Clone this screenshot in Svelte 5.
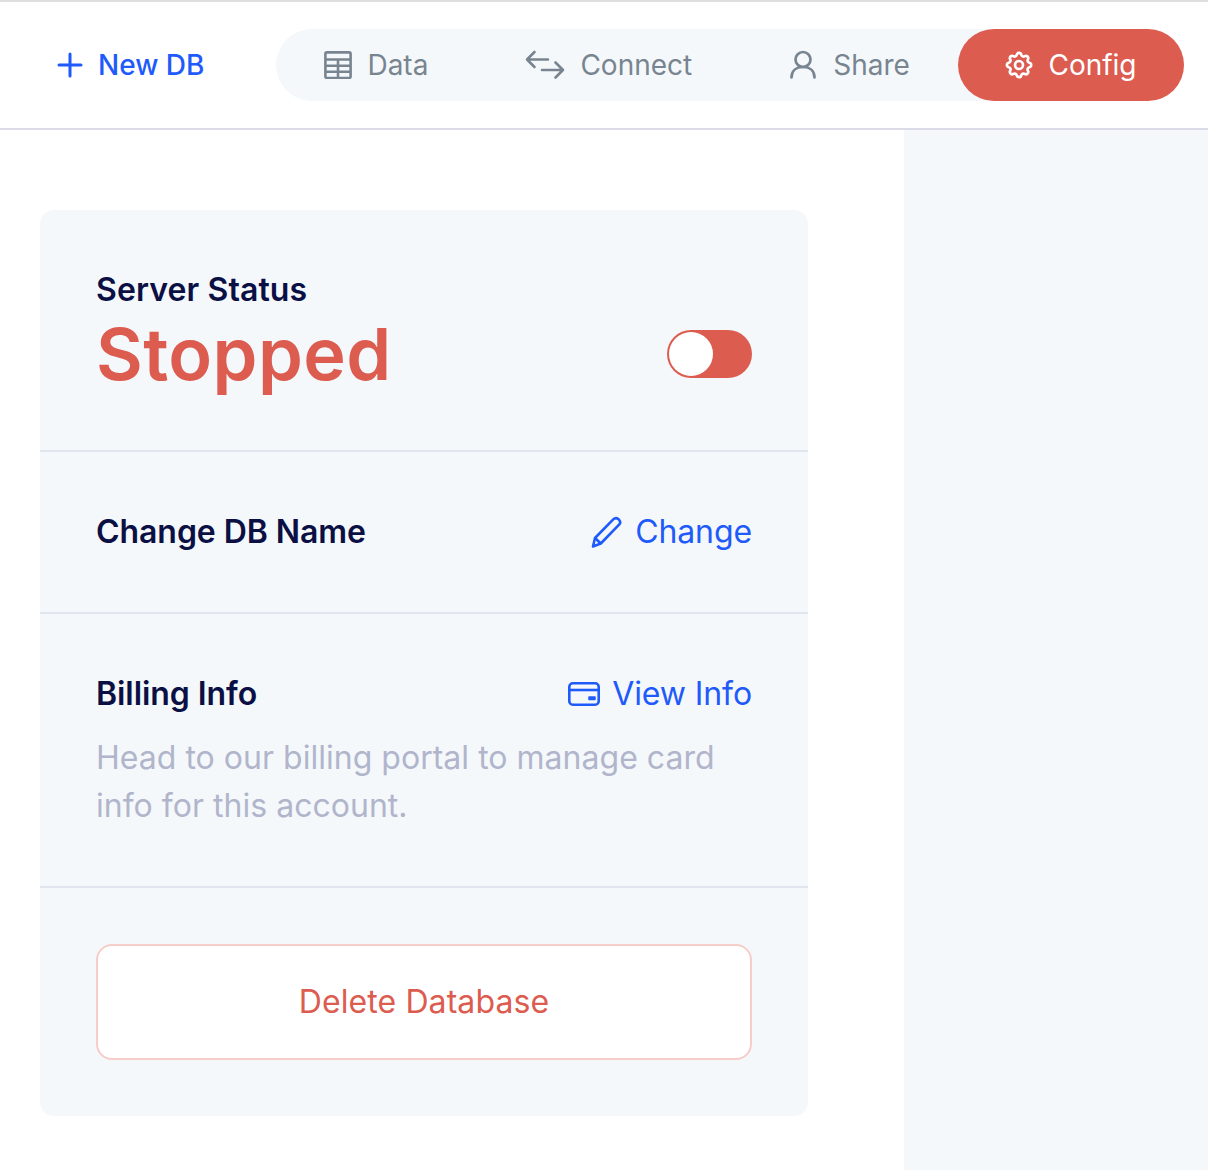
<script>
  const tabs = [
    { label: 'Data', icon: 'table', cls: 'data' },
    { label: 'Connect', icon: 'arrows', cls: 'connect' },
    { label: 'Share', icon: 'user', cls: 'share' }
  ];
</script>

<div class="page">
  <header class="top">
    <button class="new">
      <svg width="28" height="28" viewBox="0 0 28 28" fill="none" stroke="currentColor" stroke-width="3" stroke-linecap="round"><path d="M14 3v22M3 14h22"/></svg>
      <span>New DB</span>
    </button>
    <nav class="pill">
      {#each tabs as t}
        <div class="tab {t.cls}">
          {#if t.icon === 'table'}
            <svg width="28" height="28" viewBox="0 0 28 28" fill="none" stroke="currentColor" stroke-width="2.600" stroke-linejoin="round"><rect x="1.400" y="1.400" width="25.200" height="25.600" rx="1.500"/><path d="M1.400 8.500h25.200M1.400 14.700h25.200M1.400 20.800h25.200M14 8.500V27"/></svg>
          {:else if t.icon === 'arrows'}
            <svg width="40" height="30" viewBox="0 0 40 30" fill="none" stroke="currentColor" stroke-width="2.600" stroke-linecap="round" stroke-linejoin="round"><path d="M9.500 2 2 9.500l7.500 7.500M2 9.500h21M17 20h21M30.500 12.500 38 20l-7.500 7.500"/></svg>
          {:else}
            <svg width="28" height="30" viewBox="0 0 28 30" fill="none" stroke="currentColor" stroke-width="2.700" stroke-linecap="round" stroke-linejoin="round"><circle cx="14" cy="9.500" r="7.500"/><path d="M2.500 27.500c0-6 4-10.500 11.500-10.500s11.500 4.500 11.500 10.500"/></svg>
          {/if}
          <span>{t.label}</span>
        </div>
      {/each}
      <div class="tab config">
        <svg class="gear" width="32" height="32" viewBox="0 0 24 24" fill="none" stroke="currentColor" stroke-width="2" stroke-linecap="round" stroke-linejoin="round"><path d="M10.300 4.300c.4-1.800 3-1.800 3.400 0a1.700 1.700 0 0 0 2.600 1.100c1.500-.9 3.300.8 2.400 2.400a1.700 1.700 0 0 0 1.100 2.500c1.800.4 1.800 3 0 3.400a1.700 1.700 0 0 0-1.100 2.600c.9 1.500-.9 3.300-2.400 2.400a1.700 1.700 0 0 0-2.600 1.100c-.4 1.800-3 1.800-3.400 0a1.700 1.700 0 0 0-2.500-1.100c-1.600.9-3.300-.9-2.400-2.400a1.700 1.700 0 0 0-1.100-2.600c-1.800-.4-1.800-3 0-3.400a1.700 1.700 0 0 0 1.100-2.500c-.9-1.600.8-3.300 2.400-2.400 1 .6 2.300.1 2.500-1.100z"/><circle cx="12" cy="12" r="3"/></svg>
        <span>Config</span>
      </div>
    </nav>
  </header>

  <div class="body">
    <main class="main">
      <section class="card">
        <div class="row status">
          <div>
            <div class="title server">Server Status</div>
            <div class="stopped">Stopped</div>
          </div>
          <div class="toggle"><div class="knob"></div></div>
        </div>
        <div class="row name">
          <div class="title">Change DB Name</div>
          <a class="link">
            <svg width="32" height="32" viewBox="0 0 32 32" fill="none" stroke="currentColor" stroke-width="2.600" stroke-linejoin="round"><path d="M2 30.500 4 22 22.500 3.200c1.400-1.400 3.300-1.400 4.800-.2l.8.800c1.400 1.500 1.300 3.400 0 4.800L9.800 27.500z"/><path d="M4 22l5.800 5.500"/></svg>
            <span>Change</span>
          </a>
        </div>
        <div class="row billing">
          <div class="billing-head">
            <div class="title">Billing Info</div>
            <a class="link">
              <svg width="32" height="24" viewBox="0 0 32 24" fill="none" stroke="currentColor" stroke-width="2.600" stroke-linejoin="round"><rect x="1.300" y="1.300" width="29.400" height="21.400" rx="3.500"/><path d="M1.300 8h29.400"/><rect x="21" y="15" width="6" height="2.500" fill="currentColor" stroke-width="1.500"/></svg>
              <span>View Info</span>
            </a>
          </div>
          <p class="hint">Head to our billing portal to manage card info for this account.</p>
        </div>
        <div class="row del">
          <button class="delete">Delete Database</button>
        </div>
      </section>
    </main>
    <aside class="side"></aside>
  </div>
</div>

<style>
  :global(body) { margin: 0; background: #fff; }
  .page {
    width: 1208px;
    height: 1170px;
    display: flex;
    flex-direction: column;
    overflow: hidden;
    font-family: Inter, "Liberation Sans", sans-serif;
    box-sizing: border-box;
    border-top: 2px solid #dedede;
  }
  .top {
    height: 126px;
    flex: none;
    display: flex;
    align-items: center;
    box-sizing: content-box;
    border-bottom: 2px solid #dcdce8;
    padding-left: 56px;
    padding-right: 24px;
  }
  .new {
    display: flex;
    align-items: center;
    gap: 14px;
    border: 0;
    background: none;
    padding: 0;
    color: #1f5afa;
    font: 500 28px Inter, sans-serif;
    margin-right: 72px;
    white-space: nowrap;
  }
  .pill {
    flex: 1;
    height: 72px;
    margin-top: -1px;
    background: #f5f8fb;
    border-radius: 36px;
    display: flex;
    align-items: center;
  }
  .tab {
    display: flex;
    align-items: center;
    gap: 16px;
    color: #788590;
    font-size: 28px;
    font-weight: 400;
    white-space: nowrap;
  }
  .tab svg { flex: none; }
  .data { margin-left: 48px; gap: 15px; }
  .connect { margin-left: 97px; gap: 15px; }
  .share { margin-left: 97px; }
  .config {
    margin-left: auto;
    width: 226px;
    height: 72px;
    box-sizing: border-box;
    padding-right: 2px;
    justify-content: center;
    background: #dc5c50;
    color: #fff;
    border-radius: 36px;
    gap: 13px;
  }
  .body { flex: 1; display: flex; min-height: 0; }
  .main { width: 904px; flex: none; padding: 80px 0 0 40px; box-sizing: border-box; }
  .side { flex: 1; background: #f5f8fb; }
  .card { width: 768px; height: 906px; background: #f5f8fb; border-radius: 14px; display: flex; flex-direction: column; }
  .row { padding: 0 56px; box-sizing: border-box; border-bottom: 2px solid #e1e6ee; }
  .row:last-child { border-bottom: 0; }
  .status { height: 242px; display: flex; justify-content: space-between; align-items: center; padding-top: 56px; padding-bottom: 48px; }
  .title { color: #0b1044; font-size: 32px; font-weight: 600; line-height: 40px; letter-spacing: -0.06px; }
  .title.server { letter-spacing: 0.1px; }
  .stopped { color: #dc5c50; font-size: 72px; font-weight: 600; line-height: 88px; letter-spacing: 0.4px; }
  .toggle { width: 85px; height: 48px; border-radius: 24px; background: #dc5c50; position: relative; margin-top: 40px; }
  .knob { position: absolute; left: 2px; top: 2px; width: 44px; height: 44px; border-radius: 50%; background: #fff; }
  .name { height: 162px; display: flex; justify-content: space-between; align-items: center; }
  .link { display: flex; align-items: center; gap: 12px; color: #1f5afa; font-size: 32px; font-weight: 400; line-height: 40px; letter-spacing: -0.1px; }
  .billing { height: 274px; padding-top: 60px; }
  .billing-head { display: flex; justify-content: space-between; align-items: center; }
  .hint { margin: 20px 0 0; color: #b1b5cb; font-size: 32px; line-height: 48px; letter-spacing: 0.02px; }
  .del { flex: 1; padding-top: 56px; }
  .delete {
    width: 100%;
    height: 116px;
    background: #fff;
    border: 2px solid #f6cdc9;
    border-radius: 16px;
    color: #dc5c50;
    font: 400 32px Inter, sans-serif;
    letter-spacing: 0.1px;
    padding: 0 0 2px;
  }
</style>
